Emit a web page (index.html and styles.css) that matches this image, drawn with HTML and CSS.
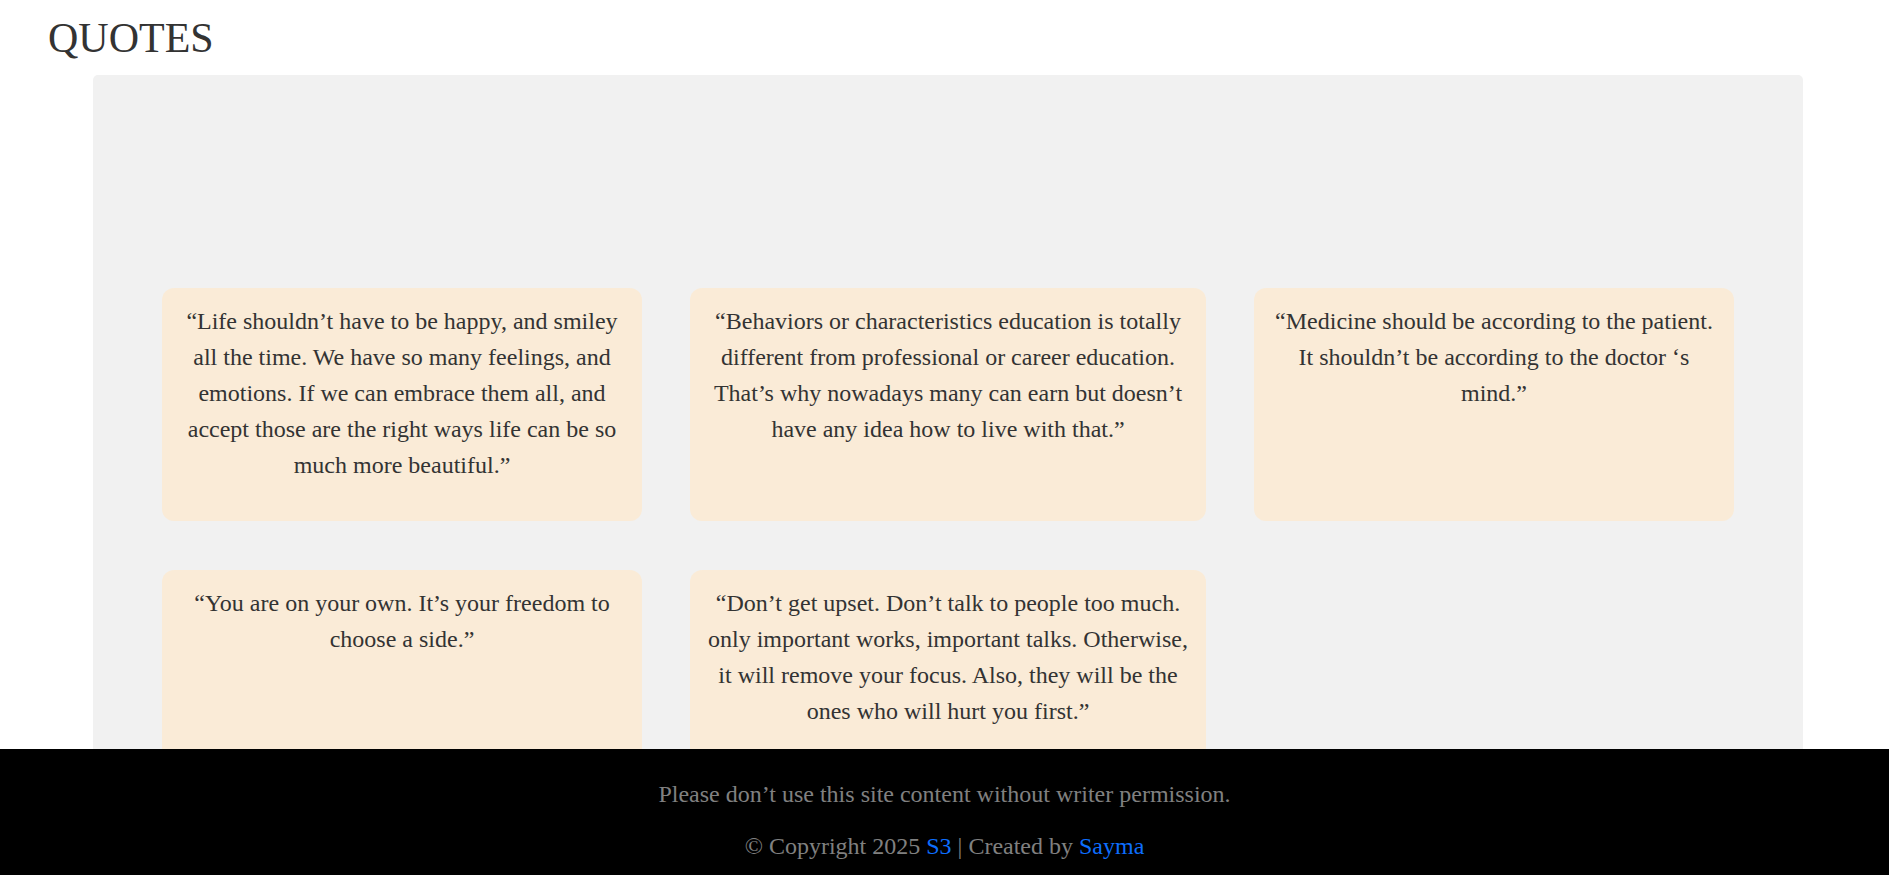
FILE: index.html
```html
<!DOCTYPE html>
<html lang="en">
<head>
<meta charset="utf-8">
<title>Quotes</title>
<link rel="stylesheet" href="styles.css">
</head>
<body>
<h1 class="page-title">QUOTES</h1>
<main class="quotes-panel">
  <div class="quotes-grid">
    <div class="quote-card"><p>“Life shouldn’t have to be happy, and smiley all the time. We have so many feelings, and emotions. If we can embrace them all, and accept those are the right ways life can be so much more beautiful.”</p></div>
    <div class="quote-card"><p>“Behaviors or characteristics education is totally different from professional or career education. That’s why nowadays many can earn but doesn’t have any idea how to live with that.”</p></div>
    <div class="quote-card"><p>“Medicine should be according to the patient. It shouldn’t be according to the doctor ‘s mind.”</p></div>
    <div class="quote-card"><p>“You are on your own. It’s your freedom to choose a side.”</p></div>
    <div class="quote-card"><p>“Don’t get upset. Don’t talk to people too much. only important works, important talks. Otherwise, it will remove your focus. Also, they will be the ones who will hurt you first.”</p></div>
  </div>
</main>
<footer class="site-footer">
  <p>Please don’t use this site content without writer permission.</p>
  <p>© Copyright 2025 <a href="#">S3</a> | Created by <a href="#">Sayma</a></p>
</footer>
</body>
</html>
```

FILE: styles.css
```css
html, body {
  margin: 0;
  padding: 0;
}

body {
  font-family: "Liberation Serif", "Times New Roman", serif;
  color: #333;
  background: #fff;
}

.page-title {
  margin: 14px 0 13px;
  padding-left: 48px;
  font-size: 42px;
  line-height: 48px;
  font-weight: normal;
  color: #333;
}

.quotes-panel {
  margin-left: 93px;
  width: 1710px;
  box-sizing: border-box;
  background: #f1f1f1;
  border-radius: 5px;
  padding: 213px 69px 60px;
}

.quotes-grid {
  display: grid;
  grid-template-columns: 480px 516px 480px;
  column-gap: 48px;
  row-gap: 49px;
}

.quote-card {
  background: #faebd7;
  border-radius: 12px;
  padding: 15px 15px 38px;
  text-align: center;
}

.quote-card p {
  margin: 0;
  font-size: 24px;
  line-height: 36px;
  color: #333;
}

.site-footer {
  position: fixed;
  left: 0;
  right: 0;
  bottom: 0;
  height: 126px;
  box-sizing: border-box;
  background: #000;
  padding: 31px 0 15px;
  text-align: center;
  color: #808080;
}

.site-footer p {
  margin: 0;
  font-size: 24px;
  line-height: 28px;
}

.site-footer p + p {
  margin-top: 24px;
}

.site-footer a {
  color: #0d6efd;
  text-decoration: none;
}
```
